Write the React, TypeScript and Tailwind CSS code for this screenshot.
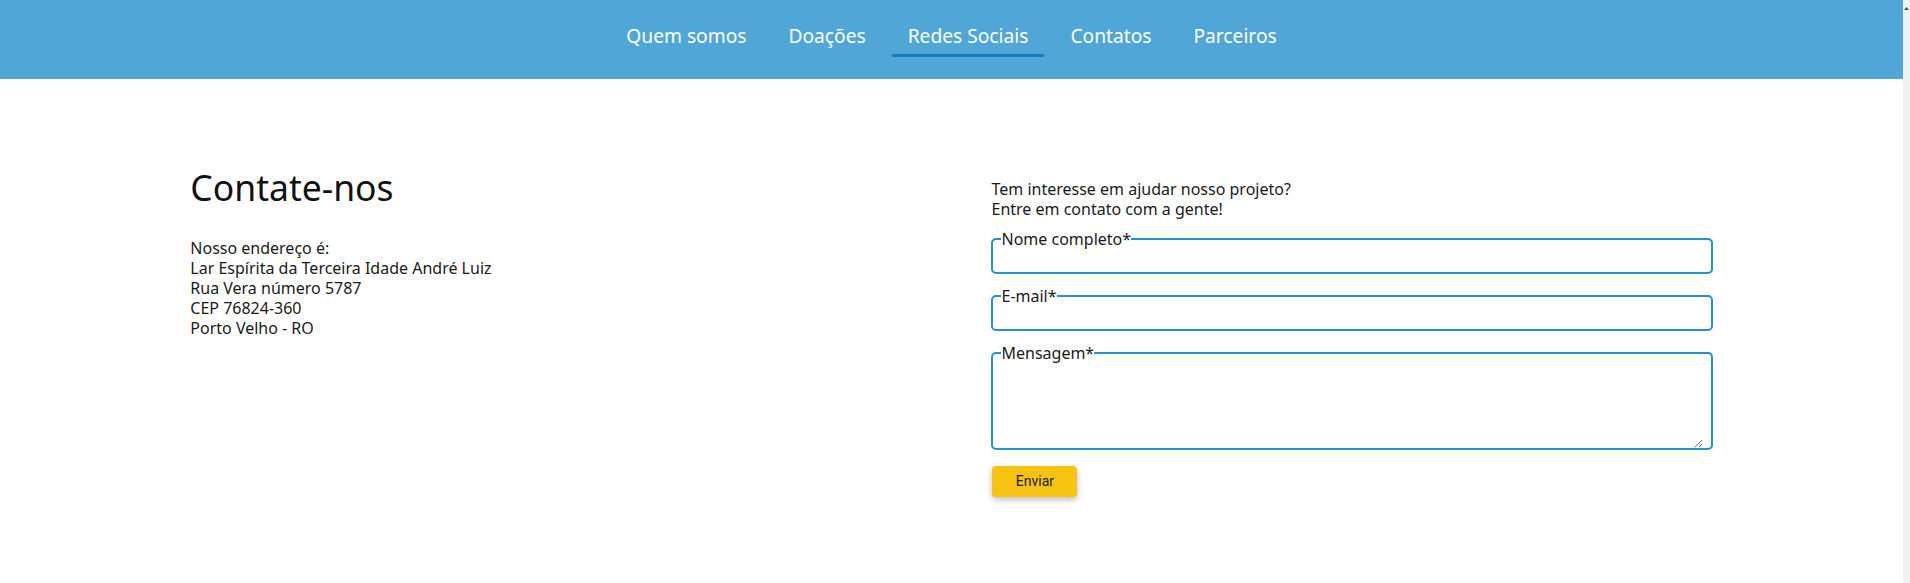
import React from 'react';

const NAV_ITEMS = ['Quem somos', 'Doações', 'Redes Sociais', 'Contatos', 'Parceiros'];
const ACTIVE = 'Redes Sociais';

const ADDRESS = [
  'Nosso endereço é:',
  'Lar Espírita da Terceira Idade André Luiz',
  'Rua Vera número 5787',
  'CEP 76824-360',
  'Porto Velho - RO',
];

const Field: React.FC<{ label: string; multiline?: boolean; first?: boolean }> = ({ label, multiline, first }) => (
  <fieldset
    className={`border-2 border-[#2a8fcf] rounded-[5px] px-[8px] pb-0 ${first ? 'mt-[10px]' : 'mt-[12px]'}`}
  >
    <legend className="px-0 text-[16px] leading-[20px] text-[#1a1a1a]">{label}</legend>
    {multiline ? (
      <textarea className="block w-full h-[85px] outline-none bg-transparent resize-y" />
    ) : (
      <input className="block w-full h-[23px] outline-none bg-transparent" />
    )}
  </fieldset>
);

const App: React.FC = () => {
  return (
    <div className="flex min-h-screen bg-white font-['Noto_Sans','Open_Sans',sans-serif] text-[#1a1a1a]">
      <div className="flex-1">
        <header className="h-[79px] bg-[#51a6d8] flex justify-center items-start pt-[23px]">
          <nav className="flex gap-[10px]">
            {NAV_ITEMS.map(item => (
              <a
                key={item}
                href="#"
                className={`px-4 pb-[5px] border-b-[3px] text-[19.2px] leading-[26px] text-white rounded-b-[2px] ${
                  item === ACTIVE ? 'border-[#1b7ab9]' : 'border-transparent'
                }`}
              >
                {item}
              </a>
            ))}
          </nav>
        </header>

        <main className="w-[80%] mx-auto grid grid-cols-2 gap-20 pt-[84px]">
          <section>
            <h1 className="text-[35.5px] leading-[48px] font-normal text-[#111]">Contate-nos</h1>
            <div className="mt-[27px] text-[16px] leading-[20px]">
              {ADDRESS.map(line => (
                <p key={line}>{line}</p>
              ))}
            </div>
          </section>

          <section className="pt-[16px]">
            <p className="text-[16px] leading-[20px]">
              Tem interesse em ajudar nosso projeto?
              <br />
              Entre em contato com a gente!
            </p>
            <form>
              <Field label="Nome completo*" first />
              <Field label="E-mail*" />
              <Field label="Mensagem*" multiline />
              <button
                type="button"
                className="mt-[16px] ml-px w-[85px] h-[31px] rounded-[4px] bg-[#f6c312] text-[14px] font-['Roboto',sans-serif] text-[#1a1a1a] shadow-[0_3px_6px_rgba(0,0,0,0.25)]"
              >
                Enviar
              </button>
            </form>
          </section>
        </main>
      </div>

      <div className="w-[7px] bg-[#f0f0f0] flex justify-end pt-[7px]">
        <svg width="5" height="3" viewBox="0 0 5 3" className="mr-[1px]">
          <path d="M0 3 L2.5 0 L5 3 Z" fill="#505050" />
        </svg>
      </div>
    </div>
  );
};

export default App;
